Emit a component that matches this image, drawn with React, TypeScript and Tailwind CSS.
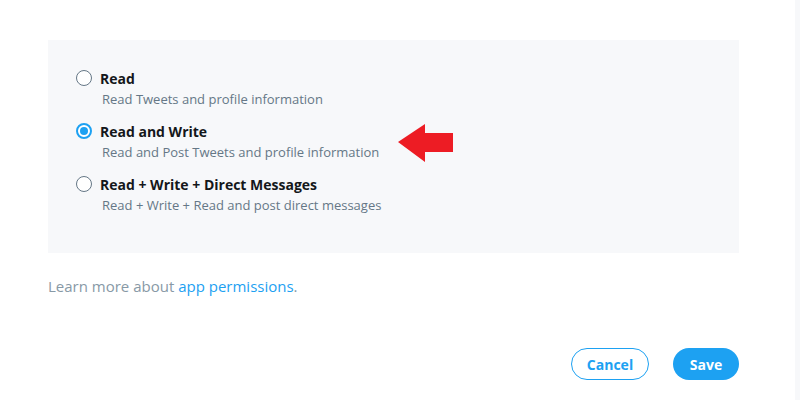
import { useState } from "react";

const options = [
  { id: "read", title: "Read", description: "Read Tweets and profile information" },
  { id: "write", title: "Read and Write", description: "Read and Post Tweets and profile information" },
  {
    id: "dm",
    title: "Read + Write + Direct Messages",
    description: "Read + Write + Read and post direct messages",
  },
];

function Radio({ checked }: { checked: boolean }) {
  return (
    <span
      className={`mt-[1px] flex h-[16px] w-[16px] shrink-0 items-center justify-center rounded-full bg-white ${
        checked ? "border-2 border-[#1da1f2]" : "border border-[#657786]"
      }`}
    >
      {checked && <span className="h-[8px] w-[8px] rounded-full bg-[#1da1f2]" />}
    </span>
  );
}

export default function App() {
  const [selected, setSelected] = useState("write");

  return (
    <div
      className="flex h-[400px] w-[800px] bg-white text-[#14171a]"
      style={{ fontFamily: '"Open Sans", "Noto Sans", sans-serif' }}
    >
      <div className="relative w-[795px] pl-12 pt-10">
        <div className="w-[691px] bg-[#f7f8fa] pb-[39px] pl-7 pt-[29px]">
          <div className="flex flex-col gap-[14px]">
            {options.map((option) => (
              <label
                key={option.id}
                className="flex cursor-pointer items-start gap-[8px]"
                onClick={() => setSelected(option.id)}
              >
                <Radio checked={selected === option.id} />
                <div>
                  <p className="text-[14px] font-bold leading-[19px]">{option.title}</p>
                  <p className="mt-[2px] pl-[2px] text-[13px] leading-[18px] text-[#657786]">
                    {option.description}
                  </p>
                </div>
              </label>
            ))}
          </div>
        </div>

        <svg
          className="absolute left-[398px] top-[124px]"
          width="56"
          height="38"
          viewBox="0 0 56 38"
        >
          <path d="M0 18 L27 0 L27 9 L55 9 L55 28 L27 28 L27 38 Z" fill="#ed1c24" />
        </svg>

        <p className="mt-[23px] text-[15px] leading-[20px] text-[#8899a6]">
          Learn more about <a className="text-[#1da1f2]">app permissions</a>.
        </p>

        <div className="mt-[52px] flex w-[691px] justify-end gap-[24px]">
          <button className="h-[32px] w-[78px] rounded-full border border-[#1da1f2] text-[14px] font-bold text-[#1da1f2]">
            Cancel
          </button>
          <button className="h-[32px] w-[66px] rounded-full bg-[#1da1f2] text-[14px] font-bold text-white">
            Save
          </button>
        </div>
      </div>
      <div className="w-[5px] bg-[#f7f8fa]" />
    </div>
  );
}
